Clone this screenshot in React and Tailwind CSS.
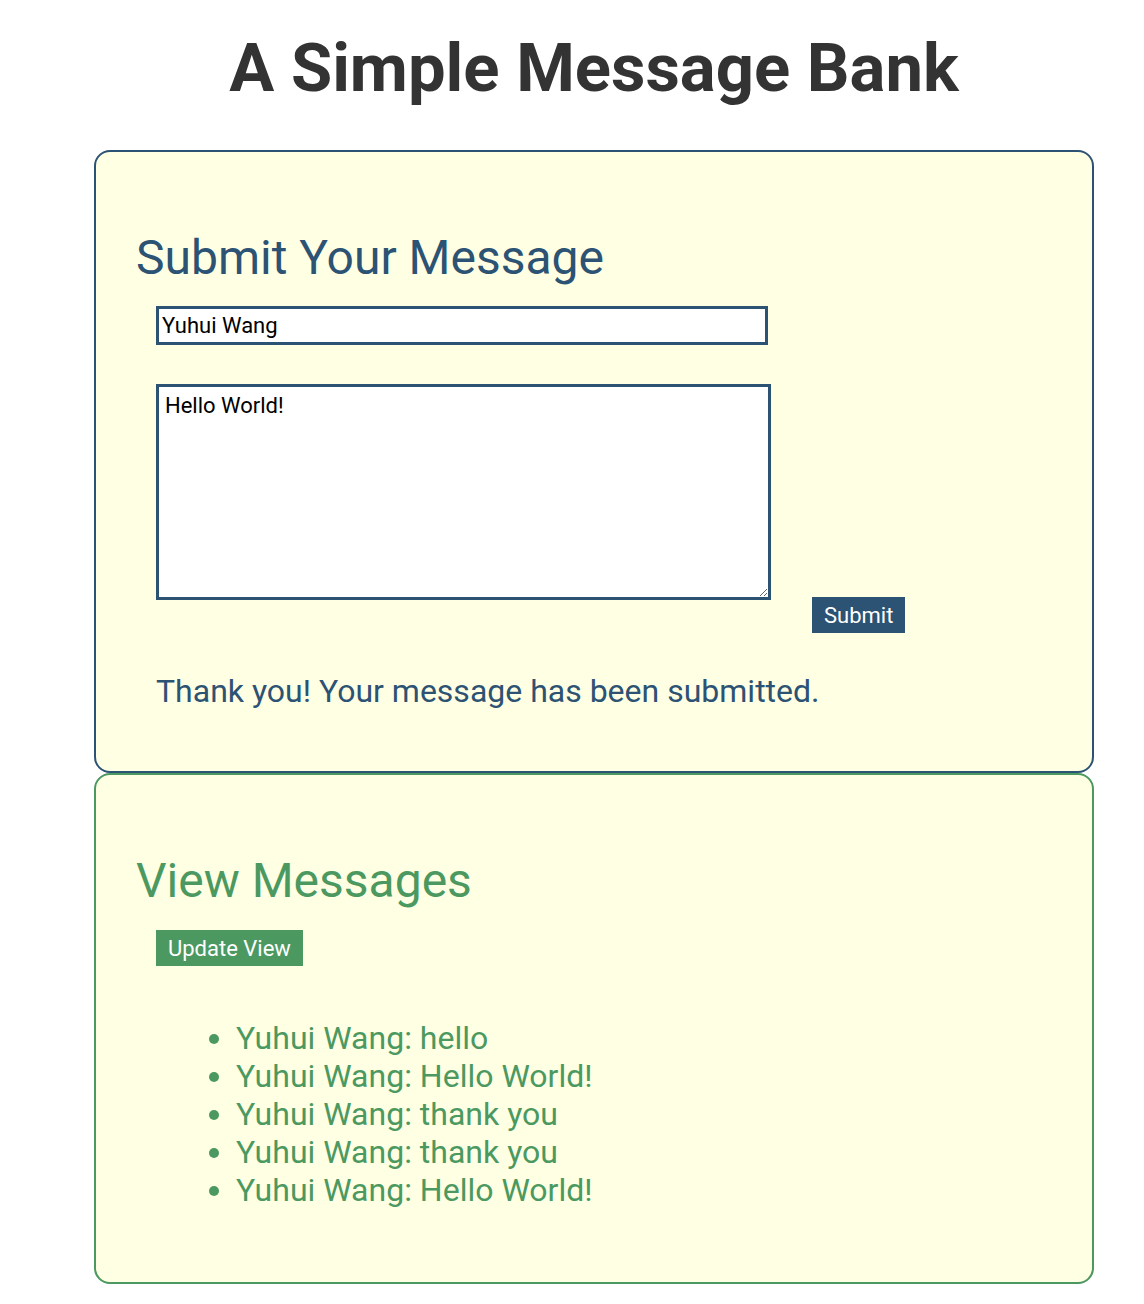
import React, { useState } from 'react';

const messages = [
  'Yuhui Wang: hello',
  'Yuhui Wang: Hello World!',
  'Yuhui Wang: thank you',
  'Yuhui Wang: thank you',
  'Yuhui Wang: Hello World!',
];

const App = () => {
  const [name, setName] = useState('Yuhui Wang');
  const [message, setMessage] = useState('Hello World!');

  return (
    <div className="min-h-screen bg-white font-['Roboto',sans-serif]">
      <div className="ml-[94px] w-[1000px]">
        {/* Title */}
        <h1 className="pt-[28px] pb-[42px] text-center text-[67px] leading-[80px] font-bold text-[#333333]">
          A Simple Message Bank
        </h1>

        {/* Submit panel */}
        <div className="rounded-[16px] border-2 border-[#2c5274] bg-[#ffffe3] px-[40px] pt-[78px] pb-[61px]">
          <h2 className="text-[48px] leading-[56px] text-[#2c5274]">Submit Your Message</h2>
          <div className="pl-[20px] pt-[20px]">
            <input
              type="text"
              value={name}
              onChange={(e) => setName(e.target.value)}
              className="block h-[39px] w-[612px] border-[3px] border-[#2c5274] bg-white px-[3px] text-[22px] text-black outline-none"
            />
            <div className="mt-[39px] flex items-end gap-[41px]">
              <textarea
                value={message}
                onChange={(e) => setMessage(e.target.value)}
                className="block h-[216px] w-[615px] border-[3px] border-[#2c5274] bg-white px-[6px] py-[5px] text-[22px] leading-[28px] text-black outline-none"
              />
              <button className="mb-[-33px] h-[36px] bg-[#2c5274] px-[12px] text-[22px] text-white">
                Submit
              </button>
            </div>
            <p className="mt-[72px] text-[32px] leading-[38px] text-[#2c5274]">
              Thank you! Your message has been submitted.
            </p>
          </div>
        </div>

        {/* View panel */}
        <div className="rounded-[16px] border-2 border-[#4b9960] bg-[#ffffe3] px-[40px] pt-[78px] pb-[73px]">
          <h2 className="text-[48px] leading-[56px] text-[#4b9960]">View Messages</h2>
          <div className="pl-[20px] pt-[21px]">
            <button className="h-[36px] bg-[#4b9960] px-[12px] text-[22px] text-white">
              Update View
            </button>
            <ul className="mt-[53px] list-disc pl-[80px] text-[32px] leading-[38px] text-[#4b9960]">
              {messages.map((m, i) => (
                <li key={i}>{m}</li>
              ))}
            </ul>
          </div>
        </div>
      </div>
    </div>
  );
};

export default App;
